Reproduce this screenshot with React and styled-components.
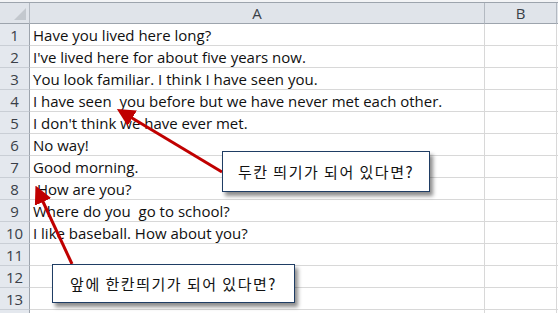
import styled, { createGlobalStyle } from 'styled-components';

const rows = [
  'Have you lived here long?',
  "I've lived here for about five years now.",
  'You look familiar. I think I have seen you.',
  'I have seen  you before but we have never met each other.',
  "I don't think we have ever met.",
  'No way!',
  'Good morning.',
  ' How are you?',
  'Where do you  go to school?',
  'I like baseball. How about you?',
  '',
  '',
  '',
];

const GlobalStyle = createGlobalStyle`
  html, body {
    margin: 0;
    padding: 0;
    background: #ffffff;
    overflow: hidden;
  }
`;

const Sheet = styled.div`
  position: relative;
  width: 558px;
  height: 313px;
  padding-top: 2px;
  box-sizing: border-box;
  background: #f3f4f6;
  font-family: "Open Sans", "Noto Sans", sans-serif;
  overflow: hidden;
`;

const Grid = styled.div`
  display: grid;
  grid-template-columns: 30px 455px 72px 20px;
  grid-template-rows: 21px repeat(14, 22px);
  background: #ffffff;
  border-top: 1px solid #9da4ad;
`;

const HeadCell = styled.div`
  display: flex;
  align-items: center;
  justify-content: center;
  background: #e0e4ea;
  border-right: 1px solid #b3b9c1;
  border-bottom: 1px solid #9da4ad;
  font-size: 15px;
  color: #3a3f48;
  box-sizing: border-box;
`;

const Corner = styled(HeadCell)`
  position: relative;
  &::after {
    content: '';
    position: absolute;
    right: 3px;
    bottom: 3px;
    border-style: solid;
    border-width: 0 0 12px 12px;
    border-color: transparent transparent #c3c8ce transparent;
  }
`;

const RowNum = styled.div`
  display: flex;
  align-items: center;
  justify-content: center;
  background: #e4e8ee;
  border-right: 1px solid #9da4ad;
  border-bottom: 1px solid #c9ced5;
  font-size: 15px;
  color: #3a3f48;
  box-sizing: border-box;
`;

const Cell = styled.div`
  display: flex;
  align-items: center;
  padding-left: ${p => (p.$first ? '3px' : '0')};
  border-right: 1px solid #d8d8d8;
  border-bottom: 1px solid #d8d8d8;
  font-size: 15px;
  color: #101010;
  white-space: pre;
  box-sizing: border-box;
  overflow: visible;
`;

const Arrows = styled.svg`
  position: absolute;
  left: 0;
  top: 0;
  pointer-events: none;
`;

const Callout = styled.div`
  position: absolute;
  left: ${p => p.$x}px;
  top: ${p => p.$y}px;
  width: ${p => p.$w}px;
  height: ${p => p.$h}px;
  display: flex;
  align-items: center;
  justify-content: center;
  background: #ffffff;
  border: 1px solid #1f3d64;
  box-sizing: border-box;
  box-shadow: 3px 4px 4px rgba(0, 0, 0, 0.45);
  font-family: "Noto Sans CJK KR", sans-serif;
  font-size: 15px;
  letter-spacing: 1.5px;
  color: #111111;
`;

export default function App() {
  return (
    <>
      <GlobalStyle />
      <Sheet>
        <Grid>
          <Corner />
          <HeadCell>A</HeadCell>
          <HeadCell>B</HeadCell>
          <HeadCell />
          {rows.map((text, i) => (
            <Row key={i} n={i + 1} text={text} />
          ))}
          <Row n="" text="" />
        </Grid>
        <Arrows width="558" height="313" viewBox="0 0 558 313">
          <defs>
            <marker id="head" markerWidth="6" markerHeight="6" refX="4" refY="3" orient="auto" markerUnits="strokeWidth">
              <path d="M0,0 L6,3 L0,6 Z" fill="#c00000" />
            </marker>
          </defs>
          <line x1="222" y1="172" x2="122" y2="112" stroke="#c00000" strokeWidth="3" markerEnd="url(#head)" />
          <line x1="72" y1="264" x2="38" y2="191" stroke="#c00000" strokeWidth="3" markerEnd="url(#head)" />
        </Arrows>
        <Callout $x={222} $y={151} $w={208} $h={41}>두칸 띄기가 되어 있다면?</Callout>
        <Callout $x={52} $y={264} $w={243} $h={39}>앞에 한칸띄기가 되어 있다면?</Callout>
      </Sheet>
    </>
  );
}

function Row({ n, text }) {
  return (
    <>
      <RowNum>{n}</RowNum>
      <Cell $first>{text}</Cell>
      <Cell />
      <Cell />
    </>
  );
}
